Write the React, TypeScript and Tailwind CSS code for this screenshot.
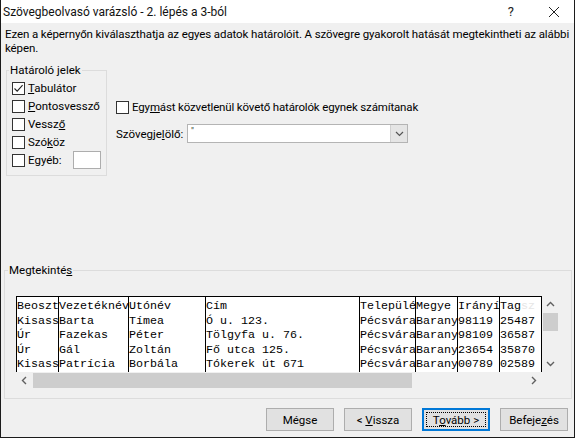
import React from "react";

const UI = "font-['Roboto',sans-serif]";

function Box({ checked = false }: { checked?: boolean }) {
  return (
    <span className="w-[13px] h-[13px] border border-[#333333] bg-white flex items-center justify-center shrink-0">
      {checked && (
        <svg width="11" height="11" viewBox="0 0 11 11">
          <path d="M1.5 5.5 L4.2 8.2 L9.6 2.2" fill="none" stroke="#222" strokeWidth="1.1" />
        </svg>
      )}
    </span>
  );
}

function CheckRow({ label, checked }: { label: React.ReactNode; checked?: boolean }) {
  return (
    <div className="h-[18px] flex items-center">
      <Box checked={checked} />
      <span className="ml-[3px] leading-[16px]">{label}</span>
    </div>
  );
}

function Chevron({ dir }: { dir: "up" | "down" | "left" | "right" }) {
  const d =
    dir === "up"
      ? "M5 10 L8.5 6.5 L12 10"
      : dir === "down"
      ? "M5 7 L8.5 10.5 L12 7"
      : dir === "left"
      ? "M10 5 L6.5 8.5 L10 12"
      : "M7 5 L10.5 8.5 L7 12";
  return (
    <svg width="17" height="17" viewBox="0 0 17 17">
      <path d={d} fill="none" stroke="#606060" strokeWidth="1.4" />
    </svg>
  );
}

const cols: { w: string; lines: React.ReactNode[] }[] = [
  { w: "w-[41px]", lines: ["Beoszt", "Kisass", "Úr", "Úr", "Kisass"] },
  { w: "w-[70px] border-l border-black", lines: ["Vezetéknév", "Barta", "Fazekas", "Gál", "Patrícia"] },
  { w: "w-[77px] border-l border-black", lines: ["Utónév", "Tímea", "Péter", "Zoltán", "Borbála"] },
  { w: "w-[154px] border-l border-black", lines: ["Cím", "Ó u. 123.", "Tölgyfa u. 76.", "Fő utca 125.", "Tókerek út 671"] },
  { w: "w-[56px] border-l border-black", lines: ["Települé", "Pécsvára", "Pécsvára", "Pécsvára", "Pécsvára"] },
  { w: "w-[42px] border-l border-black", lines: ["Megye", "Barany", "Barany", "Barany", "Barany"] },
  { w: "w-[42px] border-l border-black", lines: ["Irányí", "98119", "98109", "23654", "00789"] },
  {
    w: "flex-1 border-l border-black",
    lines: [
      <span key="t">
        Tag<span className="text-[#e6e6e6]">sz</span>
      </span>,
      "25487",
      "36587",
      "35870",
      "02589",
    ],
  },
];

function Btn({ children, focus = false }: { children: React.ReactNode; focus?: boolean }) {
  return (
    <div
      className={
        "w-[68px] h-[23px] bg-[#e1e1e1] flex items-center justify-center relative " +
        (focus ? "border border-[#0078d7] shadow-[inset_0_0_0_1px_#0078d7]" : "border border-[#adadad]")
      }
    >
      {focus && <div className="absolute inset-[3px] border border-dotted border-black" />}
      <span className="leading-[16px]">{children}</span>
    </div>
  );
}

export default function App() {
  return (
    <div className={`w-[575px] h-[438px] bg-[#f0f0f0] border-x border-b border-[#1b1b1b] flex flex-col text-[11.5px] text-black ${UI}`}>
      {/* title bar */}
      <div className="h-[23px] bg-white flex items-center pl-[2px] shrink-0">
        <span className="text-[12px] leading-[16px] text-[#111]">Szövegbeolvasó varázsló - 2. lépés a 3-ból</span>
        <span className="ml-auto mr-[34px] text-[13px] leading-[16px] text-[#222]">?</span>
        <svg width="12" height="12" viewBox="0 0 12 12" className="mr-[14px]">
          <path d="M1 1 L11 11 M11 1 L1 11" stroke="#222" strokeWidth="1" fill="none" />
        </svg>
      </div>

      {/* description */}
      <div className="pl-[4px] pt-[4px] leading-[14px] whitespace-nowrap tracking-[-0.1px]">
        Ezen a képernyőn kiválaszthatja az egyes adatok határolóit. A szövegre gyakorolt hatását megtekintheti az alábbi
        <br />
        képen.
      </div>

      {/* top row */}
      <div className="flex mt-[7px] ml-[5px]">
        <fieldset className="w-[101px] h-[114px] border border-[#dcdcdc] pl-[5px] pt-[1px]">
          <legend className="ml-[-3px] px-[1px] leading-[16px]">Határoló jelek</legend>
          <CheckRow checked label={<><u>T</u>abulátor</>} />
          <CheckRow label={<><u>P</u>ontosvessző</>} />
          <CheckRow label={<>Vessz<u>ő</u></>} />
          <CheckRow label={<>Szó<u>k</u>öz</>} />
          <div className="h-[18px] flex items-center">
            <Box />
            <span className="ml-[3px] leading-[16px]">E<u>g</u>yéb:</span>
            <span className="ml-auto mr-[5px] w-[28px] h-[18px] bg-white border border-[#adadad]" />
          </div>
        </fieldset>

        <div className="ml-[9px] pt-[36px] flex flex-col">
          <div className="h-[18px] flex items-center">
            <Box />
            <span className="ml-[3px] leading-[16px] tracking-[-0.15px]">
              Egy<u>m</u>ást közvetlenül követő határolók egynek számítanak
            </span>
          </div>
          <div className="mt-[8px] h-[19px] flex items-center">
            <span className="w-[71px] leading-[16px]">
              Szövegje<u>l</u>ölő:
            </span>
            <div className="w-[221px] h-[19px] bg-white border border-[#b4b4b4] flex items-stretch">
              <span className="flex-1 pl-[3px] text-[9px] leading-[12px] text-[#333]">"</span>
              <div className="w-[17px] bg-[#e5e5e5] border-l border-[#d0d0d0] flex items-center justify-center">
                <svg width="11" height="11" viewBox="0 0 11 11">
                  <path d="M2 4 L5.5 7.5 L9 4" fill="none" stroke="#555" strokeWidth="1.2" />
                </svg>
              </div>
            </div>
          </div>
        </div>
      </div>

      {/* preview */}
      <fieldset className="mt-[86px] ml-[3px] w-[568px] h-[137px] border border-[#dcdcdc] pl-[11px]">
        <legend className="ml-[-8px] px-[1px] leading-[16px]">
          Megtekinté<u>s</u>
        </legend>
        <div className="mt-[18px] w-[543px] flex flex-col">
          <div className="flex h-[76px]">
            <div className="w-[526px] h-[76px] bg-white border-t border-x border-black flex font-['Liberation_Mono',monospace] text-[11.67px] leading-[14.6px] overflow-hidden">
              {cols.map((c, i) => (
                <div key={i} className={`${c.w} shrink-0 overflow-hidden whitespace-pre pt-[2px]`}>
                  {c.lines.map((l, j) => (
                    <div key={j} className="h-[14.6px]">
                      {l}
                    </div>
                  ))}
                </div>
              ))}
            </div>
            <div className="w-[17px] h-[76px] flex flex-col items-center">
              <Chevron dir="up" />
              <div className="w-[15px] h-[18px] bg-[#cdcdcd]" />
              <div className="flex-1" />
              <Chevron dir="down" />
            </div>
          </div>
          <div className="w-[526px] h-[17px] flex items-center">
            <Chevron dir="left" />
            <div className="w-[379px] h-[15px] bg-[#cdcdcd]" />
            <div className="flex-1" />
            <Chevron dir="right" />
          </div>
        </div>
      </fieldset>

      {/* buttons */}
      <div className="mt-[9px] flex justify-end gap-[10px] pr-[6px]">
        <Btn>Mégse</Btn>
        <Btn>
          &lt; <u>V</u>issza
        </Btn>
        <Btn focus>
          T<u>o</u>vább &gt;
        </Btn>
        <Btn>
          Befeje<u>z</u>és
        </Btn>
      </div>
    </div>
  );
}
